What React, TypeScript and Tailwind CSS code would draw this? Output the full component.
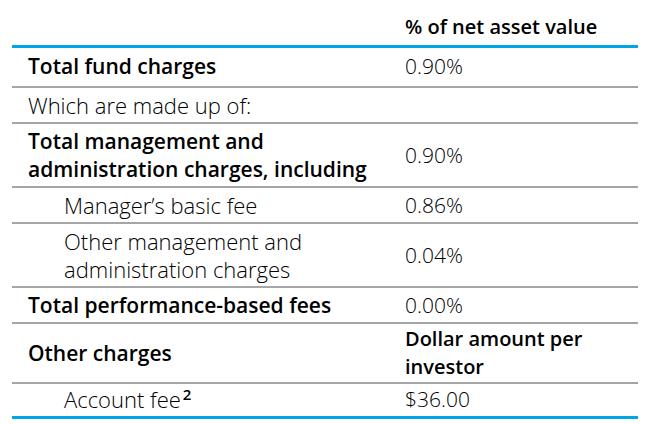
import React from "react";

type Row = {
  label: React.ReactNode;
  value?: React.ReactNode;
  bold?: boolean;
  indent?: boolean;
  valueBold?: boolean;
  pad?: string;
};

const rows: Row[] = [
  { label: "Total fund charges", value: "0.90%", bold: true, pad: "pt-[4px] pb-[6px]" },
  { label: "Which are made up of:" },
  {
    label: (
      <>
        Total management and
        <br />
        administration charges, including
      </>
    ),
    value: "0.90%",
    bold: true,
  },
  { label: "Manager’s basic fee", value: "0.86%", indent: true },
  {
    label: (
      <>
        Other management and
        <br />
        administration charges
      </>
    ),
    value: "0.04%",
    indent: true,
  },
  { label: "Total performance-based fees", value: "0.00%", bold: true },
  {
    label: "Other charges",
    value: (
      <>
        Dollar amount per
        <br />
        investor
      </>
    ),
    bold: true,
    valueBold: true,
    pad: "py-[1px]",
  },
  {
    label: (
      <>
        Account fee
        <sup className="ml-[2px] text-[15px] font-semibold relative top-[-8px]">2</sup>
      </>
    ),
    value: "$36.00",
    indent: true,
    pad: "pt-[1px] pb-[3px]",
  },
];

export default function App() {
  return (
    <div className="w-[662px] h-[424px] bg-white px-[12px] font-['Open_Sans',sans-serif] text-[21px] leading-[28px] text-black">
      <table className="w-[626px] border-collapse">
        <thead>
          <tr className="border-b-[3px] border-[#00a6e2]">
            <th className="w-[389px] p-0" />
            <th className="pl-[4px] pt-[13px] pb-[4px] text-left text-[20px] font-semibold">
              % of net asset value
            </th>
          </tr>
        </thead>
        <tbody>
          {rows.map((r, i) => (
            <tr
              key={i}
              className={
                i === rows.length - 1
                  ? "border-b-[3px] border-[#00a6e2]"
                  : "border-b-2 border-[#a6a6a6]"
              }
            >
              <td
                className={
                  (r.indent ? "pl-[52px] " : "pl-[16px] ") +
                  (r.bold ? "font-semibold " : "font-light text-[22px] ") +
                  (r.pad ?? "py-[3px]")
                }
              >
                {r.label}
              </td>
              <td
                className={
                  "pl-[4px] align-middle " +
                  (r.valueBold ? "font-semibold text-[20px] " : "font-light ") +
                  (r.pad ?? "py-[3px]")
                }
              >
                {r.value}
              </td>
            </tr>
          ))}
        </tbody>
      </table>
    </div>
  );
}
